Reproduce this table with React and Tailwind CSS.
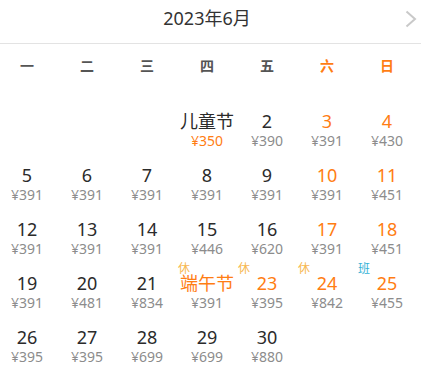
const weekdays = [
  { label: "一" },
  { label: "二" },
  { label: "三" },
  { label: "四" },
  { label: "五" },
  { label: "六", weekend: true },
  { label: "日", weekend: true },
];

const prices = {
  1: 350, 2: 390, 3: 391, 4: 430, 5: 391, 6: 391, 7: 391, 8: 391, 9: 391, 10: 391,
  11: 451, 12: 391, 13: 391, 14: 391, 15: 446, 16: 620, 17: 391, 18: 451, 19: 391,
  20: 481, 21: 834, 22: 391, 23: 395, 24: 842, 25: 455, 26: 395, 27: 395, 28: 699,
  29: 699, 30: 880,
};

const special = {
  1: { text: "儿童节", lowest: true },
  22: { text: "端午节", orange: true, tag: "休" },
  23: { orange: true, tag: "休" },
  24: { tag: "休" },
  25: { tag: "班" },
};

const Chevron = () => (
  <svg width="12" height="18" viewBox="0 0 12 18" fill="none">
    <polyline points="1.5,1.5 10,9 1.5,16.5" stroke="#c9c9c9" strokeWidth="2" />
  </svg>
);

const DayCell = ({ day, col }) => {
  const info = special[day] || {};
  const weekend = col >= 5;
  const orange = weekend || info.orange;
  return (
    <div className="relative h-[54px] pt-[7px] flex flex-col items-center">
      {info.tag && (
        <span
          className={`absolute left-[-2px] top-[-3px] text-[12px] leading-[14px] ${
            info.tag === "班" ? "text-[#35b2d6]" : "text-[#f7b84f]"
          }`}
        >
          {info.tag}
        </span>
      )}
      <span
        className={`text-[18px] leading-[22px] whitespace-nowrap ${
          orange ? "text-[#ff7d13]" : "text-[#2b2b2b]"
        }`}
      >
        {info.text || day}
      </span>
      <span
        className={`text-[14px] leading-[18px] ${
          info.lowest ? "text-[#ff7d13]" : "text-[#8c8c8c]"
        }`}
      >
        ¥{prices[day]}
      </span>
    </div>
  );
};

export default function App() {
  const startCol = 3;
  const cells = [];
  for (let i = 0; i < startCol; i++) cells.push(<div key={`e${i}`} />);
  for (let d = 1; d <= 30; d++) {
    cells.push(<DayCell key={d} day={d} col={(startCol + d - 1) % 7} />);
  }

  return (
    <div
      className="w-[421px] h-[381px] bg-white overflow-hidden"
      style={{ fontFamily: '"Noto Sans", "Noto Sans CJK SC", sans-serif' }}
    >
      {/* Month header */}
      <div className="relative h-[44px] border-b border-[#e3e3e3]">
        <div className="w-[414px] pt-[6px] text-center text-[18px] leading-[24px] text-[#333]">
          2023年6月
        </div>
        <div className="absolute right-[4px] top-[10px]">
          <Chevron />
        </div>
      </div>

      <div className="w-[414px]">
        {/* Weekday row */}
        <div className="grid grid-cols-[repeat(7,54px)] gap-x-[6px] h-[42px] items-center">
          {weekdays.map((w) => (
            <div
              key={w.label}
              className={`text-center text-[14px] font-bold ${
                w.weekend ? "text-[#ff7d13]" : "text-[#555]"
              }`}
            >
              {w.label}
            </div>
          ))}
        </div>

        {/* Days */}
        <div className="mt-[17px] grid grid-cols-[repeat(7,54px)] gap-x-[6px]">
          {cells}
        </div>
      </div>
    </div>
  );
}
